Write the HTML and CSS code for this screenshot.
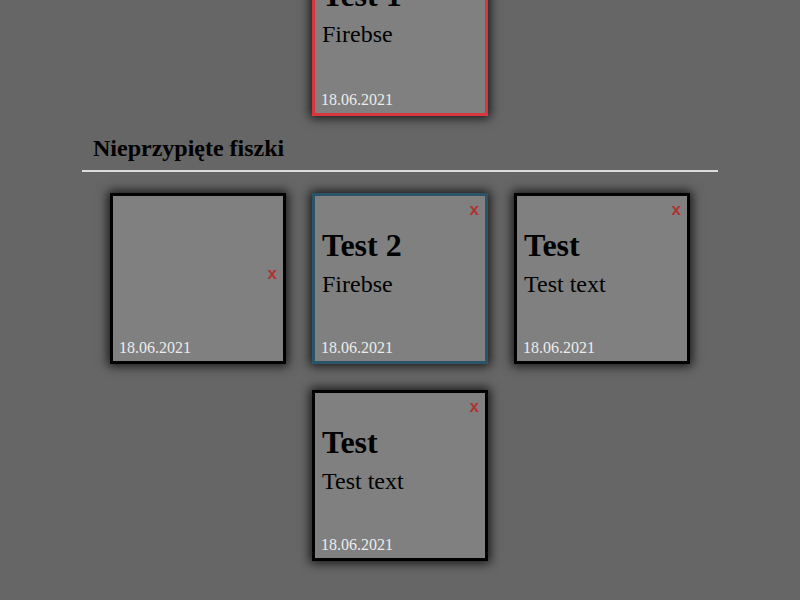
FILE: index.html
```html
<!DOCTYPE html>
<html lang="pl">
<head>
<meta charset="utf-8">
<title>Fiszki</title>
<link rel="stylesheet" href="styles.css">
</head>
<body>
<main class="page">
  <section class="cards cards--pinned">
    <article class="card card--pinned">
      <h1 class="card__title">Test 1</h1>
      <p class="card__text">Firebse</p>
      <time class="card__date">18.06.2021</time>
    </article>
  </section>

  <h2 class="section-title">Nieprzypięte fiszki</h2>
  <hr class="divider">

  <section class="cards">
    <article class="card card--empty">
      <span class="card__close">x</span>
      <time class="card__date">18.06.2021</time>
    </article>
    <article class="card card--selected">
      <span class="card__close">x</span>
      <h1 class="card__title">Test 2</h1>
      <p class="card__text">Firebse</p>
      <time class="card__date">18.06.2021</time>
    </article>
    <article class="card">
      <span class="card__close">x</span>
      <h1 class="card__title">Test</h1>
      <p class="card__text">Test text</p>
      <time class="card__date">18.06.2021</time>
    </article>
    <article class="card">
      <span class="card__close">x</span>
      <h1 class="card__title">Test</h1>
      <p class="card__text">Test text</p>
      <time class="card__date">18.06.2021</time>
    </article>
  </section>
</main>
</body>
</html>
```

FILE: styles.css
```css
html, body {
  margin: 0;
  padding: 0;
  background: #666666;
  font-family: "Liberation Serif", "Times New Roman", serif;
  color: #000;
  overflow: hidden;
}

.page {
  width: 636px;
  margin: 0 auto;
}

.cards {
  display: flex;
  flex-wrap: wrap;
  justify-content: center;
}

.cards--pinned {
  margin-top: -68px;
}

.card {
  box-sizing: border-box;
  width: 176px;
  height: 171px;
  margin: 13px;
  padding: 5px 6px 4px 7px;
  background: #808080;
  border: 3px solid #000;
  box-shadow: 0 0 10px 2px rgba(0, 0, 0, 0.8);
  display: flex;
  flex-direction: column;
}

.card--pinned {
  border-color: #d8363f;
}

.card--selected {
  border-color: #2b5468;
}

.card__close {
  align-self: flex-end;
  font-family: "Liberation Sans", Arial, sans-serif;
  font-weight: bold;
  font-size: 17px;
  line-height: 18px;
  color: #b03232;
  cursor: pointer;
}

.card--empty .card__close {
  margin-top: 64px;
}

.card__title {
  margin: 8px 0 0;
  font-size: 32px;
  line-height: 37px;
  font-weight: bold;
}

.card--pinned .card__title {
  margin-top: 24px;
}

.card__text {
  margin: 7px 0 0;
  font-size: 24px;
  line-height: 27px;
}

.card__date {
  margin-top: auto;
  margin-left: -1px;
  font-size: 16px;
  line-height: 18px;
  color: #ececec;
}

.section-title {
  margin: 0;
  padding: 5px 11px 0;
  font-size: 24px;
  line-height: 28px;
  font-weight: bold;
}

.divider {
  margin: 8px 0 8px;
  height: 2px;
  border: 0;
  background: #dcdcdc;
}
```
